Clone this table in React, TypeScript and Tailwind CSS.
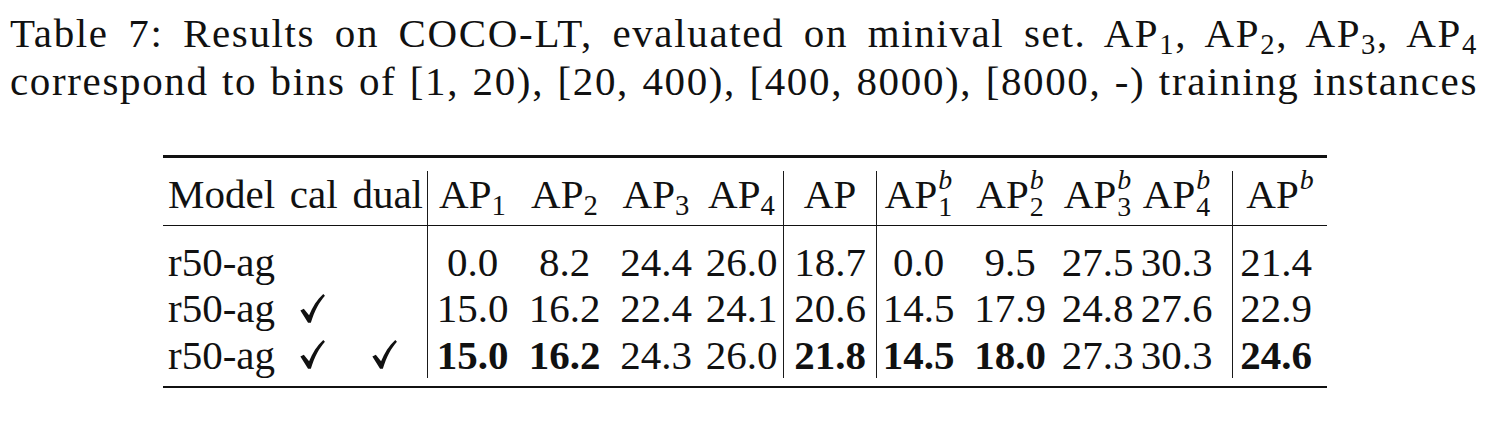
import React from 'react';

const serif = "[font-family:'Liberation_Serif','Times_New_Roman',Times,serif]";

// column widths: model, cal, dual | AP1..AP4 | AP | APb1..APb4 | APb
const gridCols =
  'grid grid-cols-[120px_58px_86px_90px_95px_88px_83px_93px_84px_100px_75px_97px_95px]';

const bar = 'border-l-[1.3px] border-[#1a1a1a]';

const Check = () => (
  <svg width="25" height="29" viewBox="0 0 24 28" className="inline-block" aria-hidden>
    <path
      d="M0.3 16 L3.6 14.2 L8.7 20.6 C12 12.4 16.4 5.4 22.4 0 L24 1.6 C18.6 7.6 14 16 10.4 27.8 L7.7 27.8 Z"
      fill="#111"
    />
  </svg>
);

const APsub = ({ n }: { n: string }) => (
  <span>
    AP<sub className="text-[0.7em]">{n}</sub>
  </span>
);

const APb = ({ n }: { n?: string }) => (
  <span className="inline-flex items-baseline">
    AP
    <span className="relative -top-[0.68em] ml-[1px] inline-flex flex-col text-[0.68em] leading-none">
      <span className="italic">b</span>
      {n && <span>{n}</span>}
    </span>
  </span>
);

interface IRow {
  cal?: boolean;
  dual?: boolean;
  vals: { v: string; b?: boolean }[];
}

const rows: IRow[] = [
  {
    vals: [
      { v: '0.0' }, { v: '8.2' }, { v: '24.4' }, { v: '26.0' }, { v: '18.7' },
      { v: '0.0' }, { v: '9.5' }, { v: '27.5' }, { v: '30.3' }, { v: '21.4' },
    ],
  },
  {
    cal: true,
    vals: [
      { v: '15.0' }, { v: '16.2' }, { v: '22.4' }, { v: '24.1' }, { v: '20.6' },
      { v: '14.5' }, { v: '17.9' }, { v: '24.8' }, { v: '27.6' }, { v: '22.9' },
    ],
  },
  {
    cal: true,
    dual: true,
    vals: [
      { v: '15.0', b: true }, { v: '16.2', b: true }, { v: '24.3' }, { v: '26.0' },
      { v: '21.8', b: true }, { v: '14.5', b: true }, { v: '18.0', b: true },
      { v: '27.3' }, { v: '30.3' }, { v: '24.6', b: true },
    ],
  },
];

// per value column: extra classes (bars, nudges)
const valCls = [
  bar,
  '',
  '',
  '',
  bar,
  bar,
  '',
  '',
  'pr-[14px]',
  `${bar} pr-2`,
];

const App = () => {
  return (
    <div className={`h-[441px] w-[1500px] bg-white text-[#111] ${serif}`}>
      <div className="ml-[10px] w-[1468px] pt-[9px] text-[41px] leading-[48px] tracking-[0.04em]">
        <div className="text-justify [text-align-last:justify]">
          Table 7: Results on COCO-LT, evaluated on minival set. <APsub n="1" />, <APsub n="2" />,{' '}
          <APsub n="3" />, <APsub n="4" />
        </div>
        <div className="text-justify [text-align-last:justify]">
          correspond to bins of [1, 20), [20, 400), [400, 8000), [8000, -) training instances
        </div>
      </div>

      <div className="ml-[163px] mt-[50px] w-[1164px] text-[41px] leading-[46px]">
        <div className="h-[2.5px] bg-[#111]" />

        {/* header */}
        <div className={`${gridCols} mt-[13px] h-[46px]`}>
          <div className="col-span-3 flex justify-between pl-[5px] pr-[4px]">
            <span>Model</span>
            <span>cal</span>
            <span>dual</span>
          </div>
          <div className={`${bar} text-center`}>
            <APsub n="1" />
          </div>
          <div className="text-center">
            <APsub n="2" />
          </div>
          <div className="text-center">
            <APsub n="3" />
          </div>
          <div className="text-center">
            <APsub n="4" />
          </div>
          <div className={`${bar} text-center`}>AP</div>
          <div className={`${bar} text-center`}>
            <APb n="1" />
          </div>
          <div className="text-center">
            <APb n="2" />
          </div>
          <div className="text-center">
            <APb n="3" />
          </div>
          <div className="pr-[14px] text-center">
            <APb n="4" />
          </div>
          <div className={`${bar} text-center`}>
            <APb />
          </div>
        </div>

        <div className="mt-[8px] h-[1.5px] bg-[#111]" />

        {/* body */}
        <div className={`${gridCols} mt-[13px]`}>
          {rows.map((row, i) => (
            <React.Fragment key={i}>
              <div className="h-[46.3px] pl-[5px]">r50-ag</div>
              <div className="flex items-center justify-center">{row.cal && <Check />}</div>
              <div className="flex items-center justify-center">{row.dual && <Check />}</div>
              {row.vals.map((val, j) => (
                <div key={j} className={`text-center ${valCls[j]} ${val.b ? 'font-bold' : ''}`}>
                  {val.v}
                </div>
              ))}
            </React.Fragment>
          ))}
        </div>

        <div className="mt-[8px] h-[2.5px] bg-[#111]" />
      </div>
    </div>
  );
};

export default App;
